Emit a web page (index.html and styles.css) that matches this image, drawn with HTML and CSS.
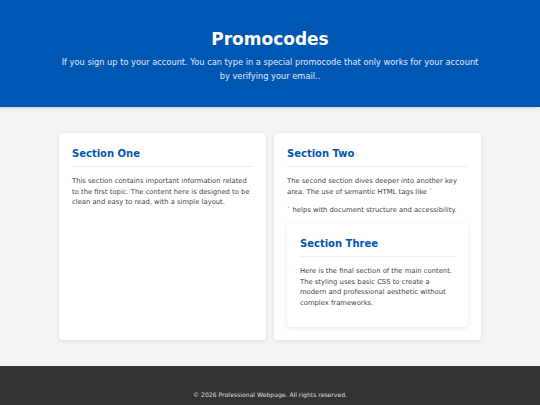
FILE: index.html
```html
<!DOCTYPE html>
<html lang="en">
<head>
<meta charset="utf-8">
<title>Promocodes</title>
<link rel="stylesheet" href="styles.css">
</head>
<body>
<header class="site-header">
  <h1 class="site-title">Promocodes</h1>
  <p class="site-intro">If you sign up to your account. You can type in a special promocode that only works for your account by verifying your email..</p>
</header>
<main class="content">
  <section class="card">
    <h2 class="card-title">Section One</h2>
    <p class="card-text">This section contains important information related to the first topic. The content here is designed to be clean and easy to read, with a simple layout.</p>
  </section>
  <section class="card">
    <h2 class="card-title">Section Two</h2>
    <p class="card-text">The second section dives deeper into another key area. The use of semantic HTML tags like `</p>
    <p class="card-text">` helps with document structure and accessibility.</p>
    <section class="card card-inner">
      <h2 class="card-title">Section Three</h2>
      <p class="card-text">Here is the final section of the main content. The styling uses basic CSS to create a modern and professional aesthetic without complex frameworks.</p>
    </section>
  </section>
</main>
<footer class="site-footer">
  <p class="footer-text">&copy; 2026 Professional Webpage. All rights reserved.</p>
</footer>
</body>
</html>
```

FILE: styles.css
```css
html, body {
  margin: 0;
  padding: 0;
}
body {
  font-family: "DejaVu Sans", Verdana, sans-serif;
  background: #f4f4f4;
  color: #333;
}
.site-header {
  background: #0056b3;
  color: #fff;
  text-align: center;
  padding: 29px 61px 24px;
  box-shadow: 0 1px 3px rgba(0, 0, 0, 0.15);
}
.site-title {
  margin: 0 0 7px;
  font-size: 17px;
  line-height: 20px;
  font-weight: bold;
}
.site-intro {
  margin: 0;
  font-size: 8.25px;
  line-height: 13.6px;
  color: #e2eaf6;
}
.content {
  display: grid;
  grid-template-columns: 1fr 1fr;
  gap: 8px;
  padding: 26px 59px;
  align-items: stretch;
}
.card {
  background: #fff;
  border-radius: 4px;
  box-shadow: 0 1px 4px rgba(0, 0, 0, 0.1);
  padding: 13px;
}
.card-inner {
  margin-top: 8px;
}
.card-title {
  margin: 0 0 9px;
  padding-bottom: 5px;
  border-bottom: 1px solid #eee;
  font-size: 10px;
  line-height: 15px;
  color: #0056b3;
}
.card-text {
  margin: 7.5px 0;
  font-size: 6.8px;
  line-height: 10.5px;
  color: #444;
}
.card-inner .card-text:last-child {
  margin-bottom: 6px;
}
.site-footer {
  background: #333;
  color: #ddd;
  text-align: center;
  padding: 24px 20px;
}
.footer-text {
  margin: 0;
  font-size: 6.1px;
  line-height: 9px;
}
```
